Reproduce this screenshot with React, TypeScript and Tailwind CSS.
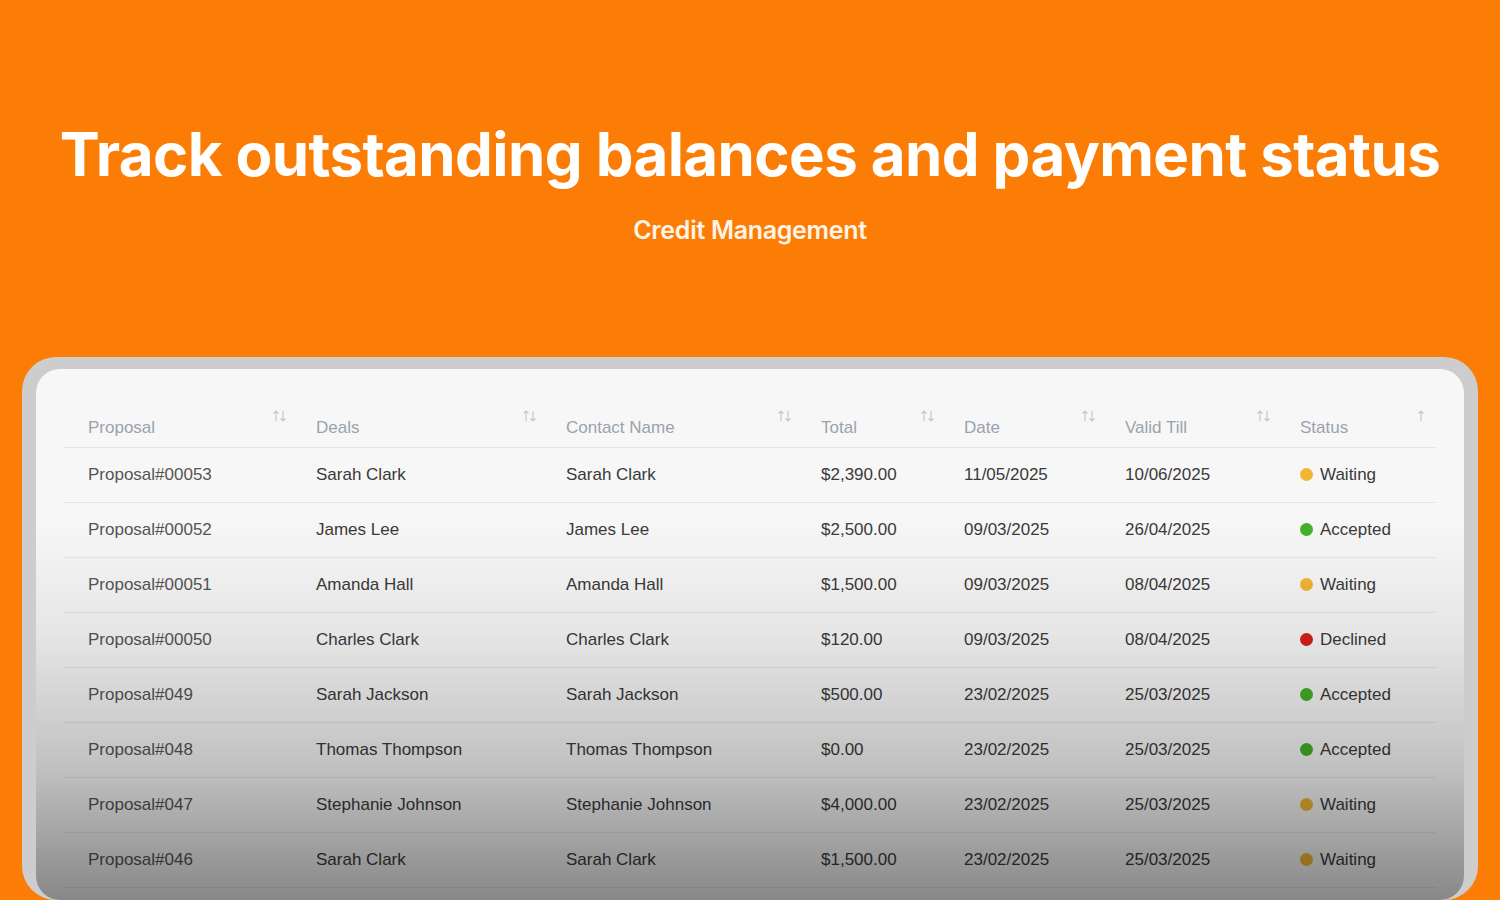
import React from "react";

type Row = {
  proposal: string;
  deal: string;
  contact: string;
  total: string;
  date: string;
  valid: string;
  status: "Waiting" | "Accepted" | "Declined";
};

const rows: Row[] = [
  { proposal: "Proposal#00053", deal: "Sarah Clark", contact: "Sarah Clark", total: "$2,390.00", date: "11/05/2025", valid: "10/06/2025", status: "Waiting" },
  { proposal: "Proposal#00052", deal: "James Lee", contact: "James Lee", total: "$2,500.00", date: "09/03/2025", valid: "26/04/2025", status: "Accepted" },
  { proposal: "Proposal#00051", deal: "Amanda Hall", contact: "Amanda Hall", total: "$1,500.00", date: "09/03/2025", valid: "08/04/2025", status: "Waiting" },
  { proposal: "Proposal#00050", deal: "Charles Clark", contact: "Charles Clark", total: "$120.00", date: "09/03/2025", valid: "08/04/2025", status: "Declined" },
  { proposal: "Proposal#049", deal: "Sarah Jackson", contact: "Sarah Jackson", total: "$500.00", date: "23/02/2025", valid: "25/03/2025", status: "Accepted" },
  { proposal: "Proposal#048", deal: "Thomas Thompson", contact: "Thomas Thompson", total: "$0.00", date: "23/02/2025", valid: "25/03/2025", status: "Accepted" },
  { proposal: "Proposal#047", deal: "Stephanie Johnson", contact: "Stephanie Johnson", total: "$4,000.00", date: "23/02/2025", valid: "25/03/2025", status: "Waiting" },
  { proposal: "Proposal#046", deal: "Sarah Clark", contact: "Sarah Clark", total: "$1,500.00", date: "23/02/2025", valid: "25/03/2025", status: "Waiting" },
];

const dot = {
  Waiting: "bg-[#f2b634]",
  Accepted: "bg-[#43b02a]",
  Declined: "bg-[#d4211c]",
};

const headers = ["Proposal", "Deals", "Contact Name", "Total", "Date", "Valid Till", "Status"];
const grid = "grid grid-cols-[228px_250px_255px_143px_161px_175px_161px]";

const SortIcon = ({ single }: { single?: boolean }) => (
  <svg width="16" height="14" viewBox="0 0 16 14" fill="none" stroke="#c4c8cc" strokeWidth="1.2">
    <path d="M4 12V2M1.5 4.5L4 2l2.5 2.5" />
    {!single && <path d="M11 2v10M8.5 9.5L11 12l2.5-2.5" />}
  </svg>
);

export default function App() {
  return (
    <div
      className="w-[1500px] h-[900px] overflow-hidden bg-[#fb7d05] flex flex-col items-center"
      style={{ fontFamily: "Inter, sans-serif" }}
    >
      <h1 className="mt-[118px] text-[60px] leading-[72px] font-bold text-white tracking-[-0.6px]">
        Track outstanding balances and payment status
      </h1>
      <p className="mt-[22px] text-[25px] font-semibold text-[#fff3e6] tracking-[-0.3px]">Credit Management</p>

      <div className="mt-[107px] w-[1456px] h-[560px] rounded-[34px] bg-[#cdcdcd] pt-[12px] px-[14px]">
        <div
          className="relative h-full rounded-[24px] bg-[#f7f7f7] overflow-hidden pt-[30px] px-[28px]"
          style={{ fontFamily: "'Liberation Sans', Arial, sans-serif" }}
        >
          <div className={`${grid} border-b border-[#e3e5e7]`}>
            {headers.map((h, i) => (
              <div key={h} className="relative h-[48px] pl-[24px] pt-[16px] text-[17px] text-[#9aa3ad]">
                {h}
                <span className="absolute right-[4px] top-[10px]">
                  <SortIcon single={i === 6} />
                </span>
              </div>
            ))}
          </div>
          {rows.map((r) => (
            <div key={r.proposal} className={`${grid} h-[55px] items-center border-b border-[#e6e7e8] text-[17px] text-[#3a3a3a]`}>
              <div className="pl-[24px] text-[#555]">{r.proposal}</div>
              <div className="pl-[24px]">{r.deal}</div>
              <div className="pl-[24px]">{r.contact}</div>
              <div className="pl-[24px]">{r.total}</div>
              <div className="pl-[24px]">{r.date}</div>
              <div className="pl-[24px]">{r.valid}</div>
              <div className="pl-[24px] flex items-center gap-[7px]">
                <span className={`w-[13px] h-[13px] rounded-full ${dot[r.status]}`} />
                {r.status}
              </div>
            </div>
          ))}
          <div className="pointer-events-none absolute inset-0 bg-[linear-gradient(to_bottom,rgba(0,0,0,0)_0%,rgba(0,0,0,0)_28%,rgba(0,0,0,0.07)_50%,rgba(0,0,0,0.22)_75%,rgba(0,0,0,0.45)_100%)]" />
        </div>
      </div>
    </div>
  );
}
